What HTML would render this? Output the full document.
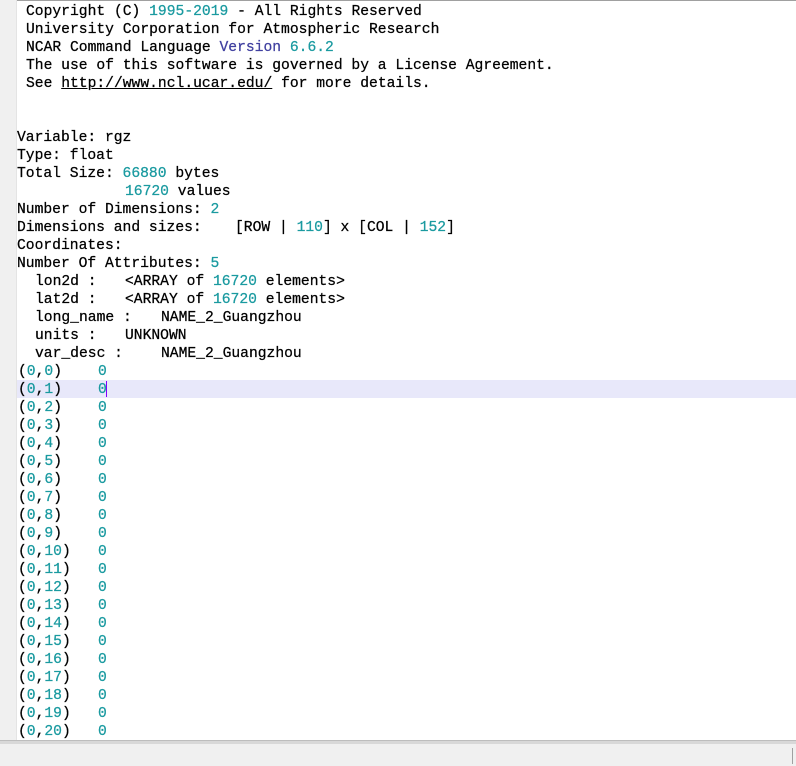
<!DOCTYPE html>
<html><head><meta charset="utf-8"><style>
html,body{margin:0;padding:0;width:796px;height:766px;overflow:hidden;background:#fff;position:relative}
.g{position:absolute;left:0;top:0;width:16px;height:741px;background:#f0f0f0;border-right:1px solid #e4e4e4}
.top{position:absolute;left:0;top:0;width:796px;height:1px;background:#a0a0a0}
.l{position:absolute;height:18px;line-height:18px;font-family:"Liberation Mono","Courier New",monospace;font-size:14.67px;color:#000;white-space:pre;-webkit-text-stroke:0.25px currentColor}
.n{color:#1a9aa0}
.v{color:#4040a0}
.hl{position:absolute;left:17px;top:380px;width:779px;height:18px;background:#e8e8fa}
.cur{position:absolute;left:106px;top:381px;width:1px;height:16px;background:#8000ff}
.sep{position:absolute;left:0;top:740px;width:796px;height:3px;background:#d8d8d8;border-top:1px solid #bdbdbd}
.st{position:absolute;left:0;top:744px;width:796px;height:22px;background:#f0f0f0}
.rl{position:absolute;left:792px;top:748px;width:1px;height:16px;background:#a0a0a0}
</style></head><body>
<div class="top"></div>
<div class="g"></div>
<div class="hl"></div>
<div class="l" style="left:26px;top:3px">Copyright (C) <span class="n">1995-2019</span> - All Rights Reserved</div>
<div class="l" style="left:26px;top:21px">University Corporation for Atmospheric Research</div>
<div class="l" style="left:26px;top:39px">NCAR Command Language <span class="v">Version</span> <span class="n">6.6.2</span></div>
<div class="l" style="left:26px;top:57px">The use of this software is governed by a License Agreement.</div>
<div class="l" style="left:26px;top:75px">See <u>http://www.ncl.ucar.edu/</u> for more details.</div>
<div class="l" style="left:17px;top:129px">Variable: rgz</div>
<div class="l" style="left:17px;top:147px">Type: float</div>
<div class="l" style="left:17px;top:165px">Total Size: <span class="n">66880</span> bytes</div>
<div class="l" style="left:125px;top:183px"><span class="n">16720</span> values</div>
<div class="l" style="left:17px;top:201px">Number of Dimensions: <span class="n">2</span></div>
<div class="l" style="left:17px;top:219px">Dimensions and sizes:</div>
<div class="l" style="left:235px;top:219px">[ROW | <span class="n">110</span>] x [COL | <span class="n">152</span>]</div>
<div class="l" style="left:17px;top:237px">Coordinates:</div>
<div class="l" style="left:17px;top:255px">Number Of Attributes: <span class="n">5</span></div>
<div class="l" style="left:35px;top:273px">lon2d :</div><div class="l" style="left:125px;top:273px">&lt;ARRAY of <span class="n">16720</span> elements&gt;</div>
<div class="l" style="left:35px;top:291px">lat2d :</div><div class="l" style="left:125px;top:291px">&lt;ARRAY of <span class="n">16720</span> elements&gt;</div>
<div class="l" style="left:35px;top:309px">long_name :</div><div class="l" style="left:161px;top:309px">NAME_2_Guangzhou</div>
<div class="l" style="left:35px;top:327px">units :</div><div class="l" style="left:125px;top:327px">UNKNOWN</div>
<div class="l" style="left:35px;top:345px">var_desc :</div><div class="l" style="left:161px;top:345px">NAME_2_Guangzhou</div>
<div id="rows"></div>
<div class="cur"></div>
<div class="sep"></div>
<div class="st"></div>
<div class="rl"></div>
<script>
var h='';for(var i=0;i<=20;i++){var t=363+18*i;h+='<div class="l" style="left:18px;top:'+t+'px">(<span class="n">0</span>,<span class="n">'+i+'</span>)</div><div class="l n" style="left:98px;top:'+t+'px">0</div>';}
document.getElementById('rows').innerHTML=h;
</script>
</body></html>
